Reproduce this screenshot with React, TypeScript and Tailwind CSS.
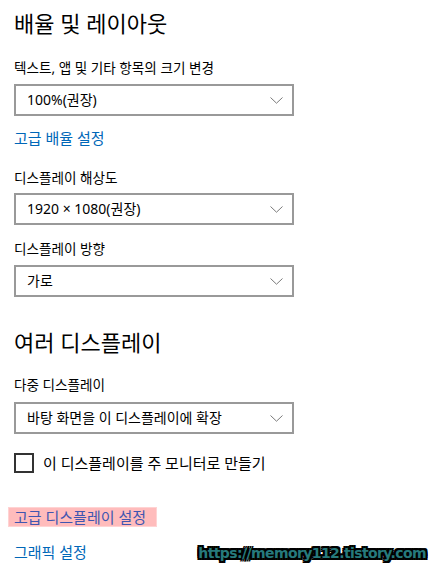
import React from "react";

const font = "font-['Noto_Sans','Noto_Sans_CJK_KR',sans-serif]";

const Chevron = () => (
  <svg width="13" height="7" viewBox="0 0 13 7" fill="none" className="shrink-0">
    <path d="M0.5 0.5 L6.5 6.2 L12.5 0.5" stroke="#7a7a7a" strokeWidth="1" />
  </svg>
);

const Select: React.FC<{ value: string; className?: string }> = ({ value, className }) => (
  <div
    className={`flex h-[32px] w-[280px] items-center justify-between border-2 border-[#999999] bg-white pl-[11px] pr-[9px] text-[14px] text-black ${className ?? ""}`}
  >
    <span className="leading-[20px]">{value}</span>
    <Chevron />
  </div>
);

const App: React.FC = () => {
  return (
    <div className={`relative h-[567px] w-[429px] overflow-hidden bg-white ${font}`}>
      <div className="flex flex-col items-start pl-[14px] text-black">
        <h1 className="mt-[8px] text-[22px] leading-[30px] font-normal">배율 및 레이아웃</h1>
        <p className="mt-[20px] text-[13.6px] leading-[20px]">텍스트, 앱 및 기타 항목의 크기 변경</p>
        <Select value="100%(권장)" className="mt-[6px]" />
        <p className="mt-[12px] text-[15px] leading-[20px] text-[#0067b8]">고급 배율 설정</p>

        <p className="mt-[20px] text-[13.6px] leading-[20px]">디스플레이 해상도</p>
        <Select value="1920 × 1080(권장)" className="mt-[5px]" />

        <p className="mt-[14px] text-[13.6px] leading-[20px]">디스플레이 방향</p>
        <Select value="가로" className="mt-[6px]" />

        <h2 className="mt-[30px] text-[22px] leading-[30px] font-normal">여러 디스플레이</h2>
        <p className="mt-[18px] text-[13.6px] leading-[20px]">다중 디스플레이</p>
        <Select value="바탕 화면을 이 디스플레이에 확장" className="mt-[7px]" />

        <label className="mt-[19px] flex items-center gap-[9px]">
          <span className="h-[20px] w-[20px] border-2 border-[#333333] bg-white" />
          <span className="text-[15px] leading-[20px]">이 디스플레이를 주 모니터로 만들기</span>
        </label>

        <div className="-ml-[6px] mt-[34px] flex h-[20px] w-[149px] items-center border border-[#ffd3d3] bg-[#ffbcbc] pl-[5px]">
          <span className="text-[15px] leading-[18px] text-[#3f56b0]">고급 디스플레이 설정</span>
        </div>

        <p className="mt-[15px] text-[15px] leading-[20px] text-[#0067b8]">그래픽 설정</p>
      </div>

      <div className="absolute bottom-[4px] right-[3px] font-['DejaVu_Sans',sans-serif] text-[14px] leading-[19px] font-bold tracking-[-0.6px] text-[#267a7c] [text-shadow:-2px_0_0_#000,2px_0_0_#000,0_-2px_0_#000,0_2px_0_#000,-2px_-2px_0_#000,2px_2px_0_#000,-2px_2px_0_#000,2px_-2px_0_#000]">
        https://memory112.tistory.com
      </div>
    </div>
  );
};

export default App;
